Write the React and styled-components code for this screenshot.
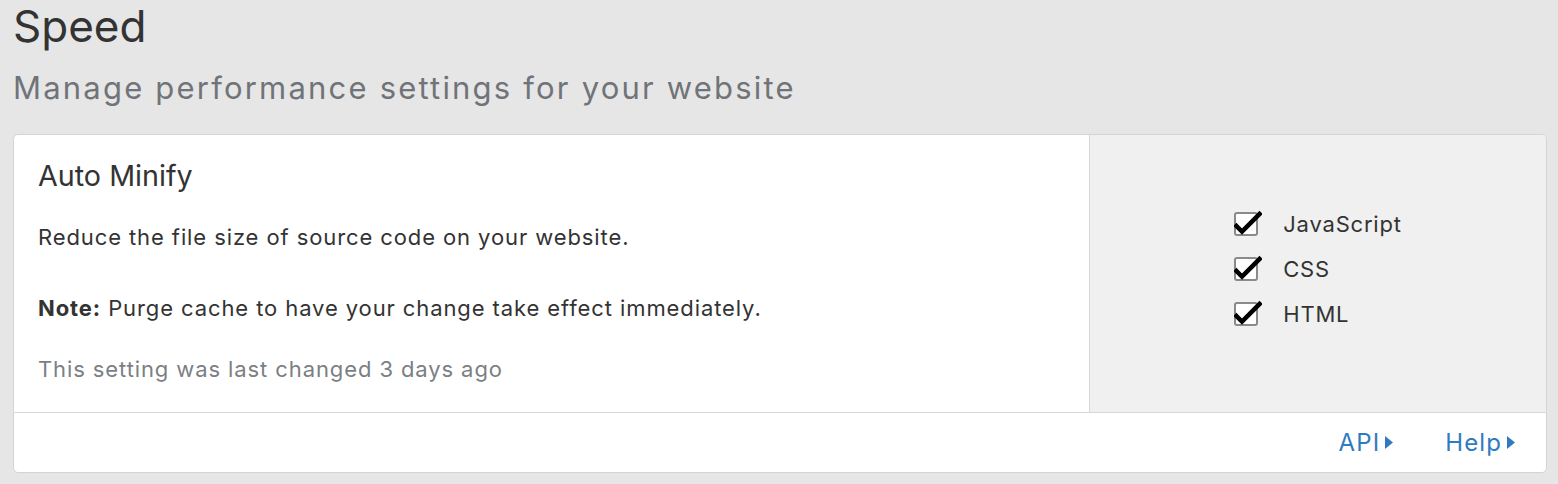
import React from "react";
import styled, { createGlobalStyle } from "styled-components";

const GlobalStyle = createGlobalStyle`
  body {
    margin: 0;
    background: #e6e6e6;
    font-family: Inter, "Liberation Sans", sans-serif;
    color: #333;
  }
`;

const Page = styled.div`
  padding: 0 11px 0 13px;
`;

const Title = styled.h1`
  margin: 0;
  font-size: 44px;
  font-weight: 400;
  line-height: 52px;
  color: #333;
`;

const Subtitle = styled.p`
  margin: 17px 0 28px;
  font-size: 31px;
  line-height: 37px;
  letter-spacing: 2.2px;
  color: #707479;
`;

const Card = styled.div`
  background: #fff;
  border: 1px solid #d4d4d4;
  border-radius: 5px;
  overflow: hidden;
`;

const CardBody = styled.div`
  display: flex;
  height: 277px;
`;

const Main = styled.div`
  flex: 1;
  padding: 23px 24px;
`;

const Heading = styled.h3`
  margin: 0 0 29px;
  font-size: 28.7px;
  font-weight: 400;
  line-height: 36px;
  color: #333;
`;

const Text = styled.p`
  margin: 0 0 ${(p) => p.$gap || 0}px;
  font-size: 22px;
  line-height: 28px;
  letter-spacing: 0.9px;
  color: ${(p) => (p.$muted ? "#7b7f84" : "#333")};
  b {
    font-weight: 700;
  }
`;

const Side = styled.div`
  width: 457px;
  background: #f0f0f0;
  border-left: 1px solid #d8d8d8;
  display: flex;
  align-items: center;
  justify-content: center;
  padding-bottom: 10px;
  box-sizing: border-box;
`;

const Options = styled.div`
  display: flex;
  flex-direction: column;
  gap: 21px;
`;

const Option = styled.label`
  display: flex;
  align-items: center;
  gap: 25px;
  font-size: 22px;
  line-height: 24px;
  letter-spacing: 0.8px;
  color: #333;
`;

const Box = styled.span`
  position: relative;
  width: 20px;
  height: 20px;
  border: 2px solid #8a8a8a;
  border-radius: 3px;
  background: #fff;
  svg {
    position: absolute;
    left: -2px;
    top: -4px;
  }
`;

const Footer = styled.div`
  border-top: 1px solid #d8d8d8;
  height: 59px;
  display: flex;
  align-items: center;
  justify-content: flex-end;
  gap: 52px;
  padding-right: 31px;
`;

const Link = styled.a`
  display: flex;
  align-items: center;
  gap: 5px;
  font-size: 24px;
  letter-spacing: 1.1px;
  color: #2f7bbf;
  text-decoration: none;
`;

const Check = () => (
  <svg width="28" height="27" viewBox="0 0 28 27">
    <path
      d="M2.5 16 L8 21.5 L25.5 4"
      fill="none"
      stroke="#000"
      strokeWidth="4.5"
      strokeLinecap="square"
    />
  </svg>
);

const Arrow = () => (
  <svg width="8" height="13" viewBox="0 0 8 13">
    <path d="M0 0 L8 6.5 L0 13 Z" fill="#2f7bbf" />
  </svg>
);

const options = ["JavaScript", "CSS", "HTML"];

export default function App() {
  return (
    <Page>
      <GlobalStyle />
      <Title>Speed</Title>
      <Subtitle>Manage performance settings for your website</Subtitle>
      <Card>
        <CardBody>
          <Main>
            <Heading>Auto Minify</Heading>
            <Text $gap={43}>Reduce the file size of source code on your website.</Text>
            <Text $gap={33}>
              <b>Note:</b> Purge cache to have your change take effect immediately.
            </Text>
            <Text $muted>This setting was last changed 3 days ago</Text>
          </Main>
          <Side>
            <Options>
              {options.map((o) => (
                <Option key={o}>
                  <Box>
                    <Check />
                  </Box>
                  {o}
                </Option>
              ))}
            </Options>
          </Side>
        </CardBody>
        <Footer>
          <Link href="#">
            API
            <Arrow />
          </Link>
          <Link href="#">
            Help
            <Arrow />
          </Link>
        </Footer>
      </Card>
    </Page>
  );
}
